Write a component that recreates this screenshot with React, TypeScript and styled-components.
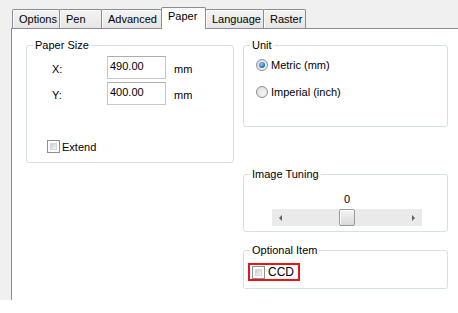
import { FC } from 'react'
import styled, { createGlobalStyle } from 'styled-components'

const GlobalStyle = createGlobalStyle`
  html, body {
    margin: 0;
    padding: 0;
    background: #ffffff;
  }
  body {
    font-family: 'Liberation Sans', Arial, sans-serif;
    font-size: 11px;
    color: #000;
  }
`

const tabs = [
  { label: 'Options', width: 48 },
  { label: 'Pen', width: 43 },
  { label: 'Advanced', width: 61 },
  { label: 'Paper', width: 45, active: true },
  { label: 'Language', width: 59 },
  { label: 'Raster', width: 43 }
]

const CheckBox: FC = () => (
  <CheckOuter>
    <CheckInner />
  </CheckOuter>
)

const Radio: FC<{ checked?: boolean }> = ({ checked }) => <RadioOuter>{checked && <RadioDot />}</RadioOuter>

const App: FC = () => {
  return (
    <>
      <GlobalStyle />
      <Window>
        <TabStrip>
          {tabs.map((tab) => (
            <Tab key={tab.label} $width={tab.width} $active={tab.active}>
              {tab.label}
            </Tab>
          ))}
        </TabStrip>
        <Page>
          <Group $width={208} $height={124}>
            <Legend>Paper Size</Legend>
            <GroupBody $padding="4px 0 0 20px">
              <FieldRow>
                <FieldLabel>X:</FieldLabel>
                <NumberInput defaultValue="490.00" />
                <UnitText>mm</UnitText>
              </FieldRow>
              <FieldRow>
                <FieldLabel>Y:</FieldLabel>
                <NumberInput defaultValue="400.00" />
                <UnitText>mm</UnitText>
              </FieldRow>
              <CheckRow>
                <CheckBox />
                <span>Extend</span>
              </CheckRow>
            </GroupBody>
          </Group>

          <Column>
            <Group $width={205} $height={88}>
              <Legend>Unit</Legend>
              <GroupBody $padding="6px 0 0 12px">
                <RadioRow>
                  <Radio checked />
                  <span>Metric (mm)</span>
                </RadioRow>
                <RadioRow>
                  <Radio />
                  <span>Imperial (inch)</span>
                </RadioRow>
              </GroupBody>
            </Group>

            <Group $width={205} $height={64} $gap={41}>
              <Legend>Image Tuning</Legend>
              <GroupBody $padding="12px 0 0 3px">
                <TuneValue>0</TuneValue>
                <ScrollBar>
                  <ScrollButton>
                    <ArrowLeft />
                  </ScrollButton>
                  <ScrollTrack>
                    <ScrollThumb />
                  </ScrollTrack>
                  <ScrollButton>
                    <ArrowRight />
                  </ScrollButton>
                </ScrollBar>
              </GroupBody>
            </Group>

            <Group $width={205} $height={45} $gap={12}>
              <Legend>Optional Item</Legend>
              <GroupBody $padding="6px 0 0 4px">
                <Highlight>
                  <CheckBox />
                  <CcdText>CCD</CcdText>
                </Highlight>
              </GroupBody>
            </Group>
          </Column>
        </Page>
      </Window>
    </>
  )
}

const Window = styled.div`
  width: 458px;
  height: 300px;
  box-sizing: border-box;
  padding: 7px 0 0 11px;
  background: #f0f0f0;
  display: flex;
  flex-direction: column;
  overflow: hidden;
`

const TabStrip = styled.div`
  display: flex;
  align-items: flex-end;
  height: 21px;
  padding-left: 1px;
`

const Tab = styled.div<{ $width: number; $active?: boolean }>`
  position: relative;
  box-sizing: border-box;
  width: ${(p) => p.$width}px;
  height: ${(p) => (p.$active ? 22 : 19)}px;
  margin-left: -1px;
  margin-bottom: ${(p) => (p.$active ? -1 : 0)}px;
  padding: ${(p) => (p.$active ? '2px 0 0 6px' : '3px 0 0 6px')};
  border: 1px solid #898c95;
  border-bottom: none;
  border-radius: 2px 2px 0 0;
  background: ${(p) => (p.$active ? '#ffffff' : 'linear-gradient(#f3f3f3, #e6e6e6)')};
  box-shadow: ${(p) => (p.$active ? 'none' : 'inset 1px 1px 0 #fdfdfd')};
  z-index: ${(p) => (p.$active ? 2 : 1)};
  line-height: 13px;
  white-space: nowrap;

  &:first-child {
    margin-left: 0;
  }
`

const Page = styled.div`
  flex: 1;
  display: flex;
  gap: 9px;
  padding: 10px 0 0 14px;
  background: #ffffff;
  border-top: 1px solid #898c95;
  border-left: 1px solid #898c95;
`

const Column = styled.div`
  display: flex;
  flex-direction: column;
`

const Group = styled.fieldset<{ $width: number; $height: number; $gap?: number }>`
  box-sizing: border-box;
  width: ${(p) => p.$width}px;
  height: ${(p) => p.$height}px;
  min-width: 0;
  margin: ${(p) => p.$gap ?? 0}px 0 0 0;
  padding: 0;
  border: 1px solid #d5dfe5;
  border-radius: 3px;
`

const Legend = styled.legend`
  margin-left: 6px;
  padding: 0 2px;
  line-height: 13px;
  font-size: 11px;
`

const GroupBody = styled.div<{ $padding: string }>`
  display: flex;
  flex-direction: column;
  padding: ${(p) => p.$padding};
`

const FieldRow = styled.div`
  display: flex;
  align-items: center;
  height: 23px;
  padding-left: 5px;

  & + & {
    margin-top: 3px;
  }
`

const FieldLabel = styled.span`
  width: 55px;
  padding-top: 2px;
`

const NumberInput = styled.input`
  box-sizing: border-box;
  width: 59px;
  height: 23px;
  margin: 0;
  padding: 0 0 4px 2px;
  border: 1px solid #c5c7cc;
  border-top-color: #abadb3;
  font-family: 'Liberation Sans', Arial, sans-serif;
  font-size: 11px;
  color: #000;
  outline: none;
`

const UnitText = styled.span`
  margin-left: 8px;
  padding-top: 2px;
`

const CheckRow = styled.div`
  display: flex;
  align-items: center;
  gap: 2px;
  height: 13px;
  margin-top: 35px;
`

const CheckOuter = styled.span`
  box-sizing: border-box;
  width: 13px;
  height: 13px;
  padding: 2px;
  border: 1px solid #8e8f8f;
  background: #ffffff;
  display: inline-flex;
  flex-shrink: 0;
`

const CheckInner = styled.span`
  flex: 1;
  background: linear-gradient(135deg, #cbcfd5, #f6f6f6);
  border: 1px solid #d4d6d9;
  box-sizing: border-box;
`

const RadioRow = styled.div`
  display: flex;
  align-items: center;
  gap: 3px;
  height: 13px;

  & + & {
    margin-top: 14px;
  }
`

const RadioOuter = styled.span`
  box-sizing: border-box;
  width: 12px;
  height: 12px;
  border-radius: 50%;
  border: 1px solid #8e8f8f;
  background: radial-gradient(circle at 65% 65%, #f6f6f6, #d6d8dc);
  display: inline-flex;
  align-items: center;
  justify-content: center;
  flex-shrink: 0;
`

const RadioDot = styled.span`
  width: 6px;
  height: 6px;
  border-radius: 50%;
  background: radial-gradient(circle at 40% 35%, #8fd1f5, #1c6bb5 70%, #0f4a8a);
`

const TuneValue = styled.div`
  text-align: center;
  line-height: 13px;
`

const ScrollBar = styled.div`
  display: flex;
  width: 150px;
  height: 17px;
  margin: 3px auto 0;
  background: #eaeaea;
`

const ScrollButton = styled.div`
  width: 17px;
  display: flex;
  align-items: center;
  justify-content: center;
`

const ArrowLeft = styled.span`
  width: 0;
  height: 0;
  border-top: 3px solid transparent;
  border-bottom: 3px solid transparent;
  border-right: 3px solid #606060;
`

const ArrowRight = styled.span`
  width: 0;
  height: 0;
  border-top: 3px solid transparent;
  border-bottom: 3px solid transparent;
  border-left: 3px solid #606060;
`

const ScrollTrack = styled.div`
  flex: 1;
  display: flex;
  justify-content: center;
`

const ScrollThumb = styled.div`
  box-sizing: border-box;
  width: 16px;
  height: 17px;
  border: 1px solid #9a9a9a;
  border-radius: 2px;
  background: linear-gradient(#f4f4f4, #d9d9d9);
  box-shadow: inset 1px 1px 0 #ffffff;
`

const Highlight = styled.div`
  display: inline-flex;
  align-items: center;
  gap: 3px;
  height: 18px;
  box-sizing: border-box;
  padding: 0 4px 0 2px;
  border: 2px solid #e3161b;
  align-self: flex-start;
`

const CcdText = styled.span`
  font-size: 12px;
  line-height: 14px;
`

export default App
